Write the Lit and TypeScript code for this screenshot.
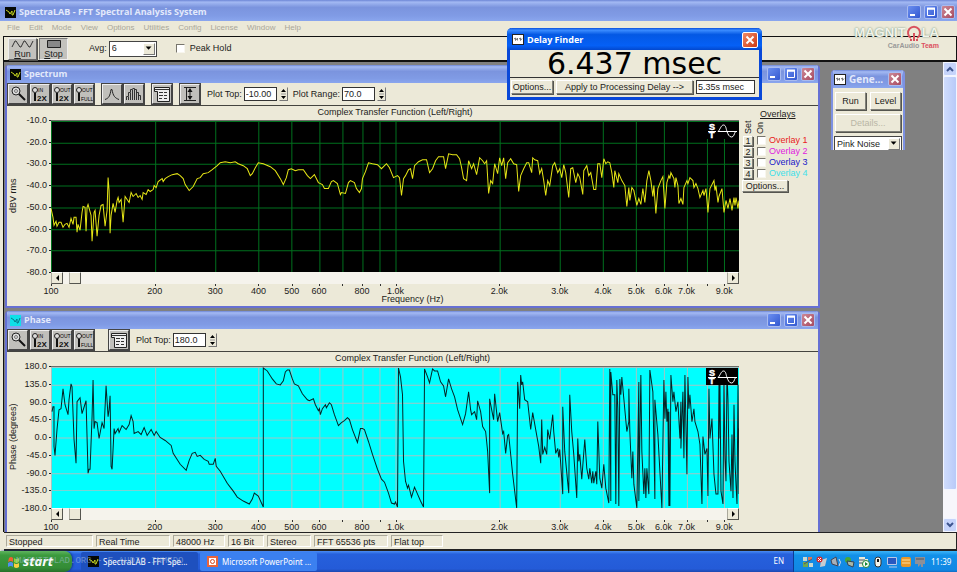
import { LitElement, html, svg, css } from "lit";
import { customElement, property } from "lit/decorators.js";

interface Series {
  id: string;
  unit: string;
  labels: string[];
  box: [number, number, number, number];
  points: string;
}

const spectrum: Series = {
  id: "spectrum",
  unit: "dBV rms",
  labels: ["-10.0", "-20.0", "-30.0", "-40.0", "-50.0", "-60.0", "-70.0", "-80.0"],
  box: [51, 120, 687, 152],
  points: `51,208 53,217 54,225 56,221 57,226 59,222 61,222 63,227 65,224 67,223 69,227 71,218 73,224 74,217 76,217 77,232 78,224 80,230 82,212 83,206 85,207 86,231 87,207 88,204 91,215 92,241 94,212 95,210 97,236 99,215 101,205 103,204 105,226 107,210 108,177 109,190 110,233 111,215 113,203 115,212 117,200 118,197 119,202 121,199 123,222 125,196 129,202 131,192 133,196 136,193 138,197 140,195 142,199 143,192 146,194 148,189 150,191 153,189 154,185 156,187 158,181 162,178 163,181 165,178 168,176 172,174 177,173 180,175 183,178 185,184 189,190 193,186 197,178 200,177 203,173 208,172 212,169 217,165 220,162 225,161 230,162 235,161 238,163 243,165 247,168 250,175 252,173 255,167 258,162 263,163 270,166 275,170 280,178 283,184 286,177 288,169 291,168 295,170 298,169 303,169 307,175 310,178 314,174 318,182 322,184 324,188 328,188 331,181 333,180 337,183 340,194 341,192 345,193 348,182 350,180 354,182 356,188 359,192 361,188 362,178 365,171 368,162 372,163 377,164 381,168 386,163 389,167 393,177 397,175 399,177 401,195 403,178 405,175 408,169 410,168 412,178 414,165 418,161 422,159 426,159 429,172 432,168 435,160 438,156 443,156 445,168 448,153 452,154 456,154 459,158 461,167 463,178 466,180 468,160 471,168 473,163 476,174 479,157 482,160 484,163 486,160 488,193 490,180 492,183 494,163 497,173 499,157 501,165 503,157 505,178 507,162 510,158 513,163 516,164 518,191 520,175 523,168 526,162 528,162 531,172 532,157 534,159 537,160 539,173 541,168 543,180 545,195 547,180 549,185 552,165 554,162 557,172 559,168 561,177 563,164 565,172 568,197 570,168 572,167 575,182 577,173 579,177 582,194 583,170 586,165 588,175 590,172 593,189 595,189 597,163 599,163 601,177 603,158 605,163 607,161 609,162 611,172 613,187 614,170 617,182 618,173 621,180 624,185 626,206 628,187 629,200 631,187 633,190 636,205 638,198 640,204 642,188 644,202 646,180 648,170 650,180 652,196 653,185 655,213 657,188 660,180 662,176 664,208 666,182 668,175 669,178 670,172 673,178 674,187 675,177 677,185 678,203 680,198 682,204 683,187 686,180 687,183 689,177 692,180 693,187 695,183 697,188 699,197 702,190 703,195 705,188 707,212 709,188 713,180 714,190 715,185 717,202 718,196 721,188 723,212 725,200 727,208 729,198 731,210 733,197 734,205 735,197 737,208 738,200`,
};

const phase: Series = {
  id: "phase",
  unit: "Phase (degrees)",
  labels: ["180.0", "135.0", "90.0", "45.0", "0.0", "-45.0", "-90.0", "-135.0", "-180.0"],
  box: [51, 365, 687, 142],
  points: `52,410 53,405 54,405 54,445 55,454 57,428 59,408 61,407 63,387 65,403 68,413 69,398 71,382 72,385 74,438 76,462 77,400 80,396 82,412 86,399 88,472 89,468 90,468 92,415 93,378 94,427 95,420 97,421 99,437 102,421 104,427 106,384 108,415 109,408 110,394 111,465 112,468 114,427 115,432 118,427 119,431 122,424 126,428 129,423 131,414 133,420 134,432 138,430 141,433 144,426 147,434 151,428 154,434 156,430 160,436 165,439 171,444 173,452 180,463 186,469 189,459 192,452 195,451 197,455 200,454 204,458 208,460 209,463 213,463 215,457 216,465 220,470 227,482 233,490 237,496 243,500 249,503 252,498 254,492 258,495 263,506 263,366 267,369 272,377 276,382 280,383 283,379 285,370 287,368 289,368 292,377 294,382 298,384 302,392 307,398 309,399 313,397 315,403 318,409 319,407 320,413 322,407 325,403 326,406 329,401 331,403 334,413 338,424 341,421 344,419 347,416 349,418 352,428 357,441 360,427 362,427 364,428 368,440 372,453 377,468 381,478 384,481 388,492 391,502 394,503 395,501 397,506 398,366 400,375 402,393 403,460 405,480 407,487 408,484 411,496 414,486 417,493 420,500 423,506 424,367 427,375 429,381 432,367 434,369 437,369 440,380 443,384 445,395 448,377 451,387 454,395 457,408 462,423 465,412 468,390 470,408 471,413 474,410 476,418 477,399 480,410 482,425 485,430 487,450 489,492 489,397 491,408 493,418 494,392 497,420 499,411 502,432 503,430 505,452 507,434 508,433 512,473 516,507 517,380 519,407 520,373 521,383 522,380 524,398 527,400 530,428 532,411 535,428 538,445 540,462 541,418 542,453 544,446 546,453 547,428 549,438 552,413 553,430 555,452 557,447 558,456 559,448 562,493 562,405 564,450 568,492 569,393 571,430 573,453 576,497 577,437 578,460 579,453 581,478 584,438 586,467 588,478 589,467 591,482 592,470 593,482 595,470 596,483 597,420 599,477 601,487 603,463 605,487 608,502 609,367 610,500 610,370 612,393 614,393 615,503 616,378 617,407 618,505 619,377 620,393 621,375 623,397 626,430 628,420 628,387 629,430 631,477 632,450 633,483 636,507 638,380 638,500 640,373 641,450 643,493 644,467 645,497 646,467 648,493 649,368 652,390 654,498 654,398 657,433 659,470 661,507 663,378 664,417 665,390 666,420 667,407 668,505 668,410 669,505 670,373 672,400 673,390 675,410 677,400 679,437 680,400 680,447 682,390 683,457 684,373 686,473 687,375 688,407 689,393 691,420 693,407 694,420 697,430 699,443 701,503 702,435 704,453 706,447 707,495 708,387 709,437 711,417 713,473 715,493 717,493 718,383 719,437 719,380 720,490 722,503 723,380 724,457 725,480 726,370 727,398 728,460 730,490 731,433 732,497 733,403 734,460 735,483 736,503 737,383 738,493 738,427`,
};

const DECADES = 687 / 344;
const frequencies = [100, 200, 300, 400, 500, 600, 700, 800, 900, 1000, 2000, 3000, 4000, 5000, 6000, 7000, 8000, 9000];
const unlabelled = new Set([700, 900, 8000]);
const fraction = (f: number) => Math.log10(f / 100) / DECADES;
const caption = (f: number) => (unlabelled.has(f) ? "" : f < 1000 ? String(f) : `${f / 1000}.0k`);

const controls = css`
  * { box-sizing: border-box; }
  button, input, select {
    font: inherit;
    color: inherit;
    margin: 0;
    padding: 0;
    border-radius: 0;
  }
  button {
    background: #ece9d8;
    border: 1px solid;
    border-color: #fff #808078 #808078 #fff;
    box-shadow: 1px 1px 0 #55554f;
    white-space: nowrap;
  }
  svg { display: block; flex: none; }
  .check {
    appearance: none;
    width: 9px;
    height: 9px;
    background: #fff;
    border: 1px solid;
    border-color: #77756c #f8f6ee #f8f6ee #77756c;
  }
`;

@customElement("signal-plot")
export class SignalPlot extends LitElement {
  @property({ attribute: false }) series: Series = spectrum;

  static styles = [controls, css`
    :host {
      display: grid;
      grid-template-columns: 12px 32px minmax(0, 1fr);
      grid-template-rows: 14px auto 12px 12px;
      line-height: 10px;
    }
    .title { grid-area: 1 / 3; text-align: center; line-height: 13px; }
    .centred { grid-column: 1 / 4; margin-right: -79px; }
    .unit {
      grid-area: 2 / 1;
      writing-mode: vertical-rl;
      rotate: 180deg;
      text-align: center;
      white-space: nowrap;
      line-height: 12px;
      font-size: 9px;
    }
    .scale {
      grid-area: 2 / 2;
      display: flex;
      flex-direction: column;
      justify-content: space-between;
      text-align: right;
      margin: -5px 0;
    }
    .scale span { padding-right: 4px; position: relative; }
    .scale span::after {
      content: "";
      position: absolute;
      right: 0;
      top: 5px;
      width: 2px;
      height: 1px;
      background: #222;
    }
    .plot { grid-area: 2 / 3; position: relative; height: 152px; border-top: 1px solid #6d6d68; }
    .phase { height: 142px; }
    .graph { width: 100%; height: 100%; background: #000; }
    .phase .graph { background: #00ffff; }
    .line { fill: none; stroke: #e6e616; stroke-width: 1; }
    .phase .line { stroke: #042426; }
    .grid { stroke: #00701e; }
    .phase .grid { stroke: #a4c4c4; }
    .mode { position: absolute; top: 1px; right: 1px; background: #000; }
    .mode text { font: bold 9px "Liberation Sans", sans-serif; fill: #fff; stroke: #fff; stroke-width: 0.5; }
    .bar { grid-area: 3 / 3; display: flex; background: #f5f3ec; height: 12px; }
    .bar button {
      width: 12px;
      display: grid;
      place-items: center;
      box-shadow: none;
      border-color: #fff #55554f #55554f #aaa89c;
    }
    .thumb { margin-left: 6px; }
    .right { margin-left: auto; }
    .axis { grid-area: 4 / 3; position: relative; }
    .mark {
      position: absolute;
      top: 0;
      width: 32px;
      margin-left: -16px;
      padding-top: 2px;
      text-align: center;
    }
    .mark::before {
      content: "";
      position: absolute;
      left: 16px;
      top: 0;
      width: 1px;
      height: 2px;
      background: #333;
    }
  `];

  render() {
    const s = this.series;
    const [x, y, w, h] = s.box;
    const last = s.labels.length - 1;
    return html`
      <div class="title ${s === phase ? "centred" : ""}">Complex Transfer Function (Left/Right)</div>
      <div class="unit">${s.unit}</div>
      <div class="scale">${s.labels.map((l) => html`<span>${l}</span>`)}</div>
      <div class="plot ${s.id}">
        <svg class="graph" viewBox=${`${x} ${y} ${w} ${h}`} preserveAspectRatio="none" role="img" aria-label=${s.unit}>
          ${frequencies.map((f) => {
            const gx = Math.round(x + fraction(f) * w) + 0.5;
            return svg`<line class="grid" x1=${gx} x2=${gx} y1=${y} y2=${y + h}></line>`;
          })}
          ${s.labels.map((_, i) => {
            const gy = Math.round(y + (i * h) / last) + 0.5;
            return svg`<line class="grid" x1=${x} x2=${x + w} y1=${gy} y2=${gy}></line>`;
          })}
          <polyline class="line" points=${s.points}></polyline>
        </svg>
        <svg class="mode" width="32" height="17" viewBox="0 0 32 17" fill="none" stroke="#fff">
          <text x="3" y="8">S</text>
          <text x="3" y="16">T</text>
          <path d="M2 9.500H10" />
          <path d="M12 9.500H31M12 9.500C14 8 15 3 17.500 3S20 7 21 9.500S23 15 25.500 15S28 12 29.500 9.500" />
        </svg>
      </div>
      <div class="bar">
        <button aria-label="Scroll left"><svg width="5" height="6"><path d="M4 0V6L1 3Z" /></svg></button>
        <button class="thumb" aria-label="Scroll position"></button>
        <button class="right" aria-label="Scroll right"><svg width="5" height="6"><path d="M1 0V6L4 3Z" /></svg></button>
      </div>
      <div class="axis">
        ${frequencies.map((f) => html`<span class="mark" style="left:${fraction(f) * 100}%">${caption(f)}</span>`)}
      </div>`;
  }
}

const lens = svg`<circle cx="6" cy="5" r="4" fill="#ddd" stroke="#222"></circle><circle cx="6" cy="5" r="1.500" stroke="#777"></circle><path d="M9 8L15 14" stroke="#111" stroke-width="2"></path>`;
const zoomIcon = (top: string, low: string) => svg`
  <circle cx="3" cy="4" r="2.500" fill="#ddd" stroke="#222"></circle>
  <path d="M3 7V15" stroke="#111" stroke-width="2"></path>
  <text class="tiny" x="6" y="6">${top}</text>
  <text class=${low === "2X" ? "big" : "tiny"} x="5" y="15">${low}</text>`;
const peakIcon = svg`<path d="M1 13.500C5 12 6 10 7 3.500H8C9 10 11 12 15 13.500" stroke="#222"></path>`;
const barsIcon = svg`<path d="M0.500 14V10.500H2.500V14M2.500 10V6.500H4.500V14M4.500 6V3.500H6.500V14M6.500 2.500H8.500V14M8.500 3.500H10.500V14M10.500 6.500H12.500V14M12.500 9.500H14.500V14" stroke="#333"></path>`;
const panelIcon = svg`<path d="M0.500 1.500H15.500V15.500H3.500V5.500H0.500Z" fill="#eee" stroke="#222"></path><path d="M1 3.500H15M5 6.500H9M5 9.500H9M5 12.500H8M10 6.500H13M10 9.500H13M10 12.500H13" stroke="#333"></path>`;
const rangeIcon = svg`<path d="M2 1.500H14M2 14.500H14M8 3V13M4.500 2V14" stroke="#222"></path><path d="M8 2L5.500 6H10.500ZM8 14L5.500 10H10.500Z" fill="#111"></path>`;

@customElement("app-root")
export class AppRoot extends LitElement {
  static styles = [controls, css`
    :host {
      display: flex;
      flex-direction: column;
      position: relative;
      min-height: 100vh;
      overflow: hidden;
      background: #ece9d8;
      color: #1c1c1a;
      font: 9px/11px "Liberation Sans", Arial, sans-serif;
    }
    .caption {
      display: flex;
      align-items: center;
      gap: 3px;
      height: 18px;
      padding: 0 3px;
      color: #e3e9fb;
      background: linear-gradient(#6d86d6, #a3b9f3 10%, #7b94de 35%, #809be5 75%, #8aa6ee);
      font: bold 9px/12px "Open Sans", "Noto Sans", sans-serif;
      white-space: nowrap;
    }
    .caption .name { flex: 1; overflow: hidden; text-overflow: ellipsis; }
    .main { height: 21px; padding: 3px 2px 0 5px; }
    .win {
      width: 14px;
      height: 14px;
      display: grid;
      place-items: center;
      border: 1px solid #a9bbef;
      border-radius: 2px;
      background: linear-gradient(135deg, #6b8ff0, #3358d0);
      box-shadow: none;
    }
    .close { background: linear-gradient(135deg, #cc8896, #a84a60); }
    .menu { display: flex; gap: 9px; height: 15px; padding: 0 7px; font-size: 8px; line-height: 14px; color: #aaa798; }
    .menu a { color: inherit; text-decoration: none; }
    .tools {
      display: flex;
      align-items: center;
      height: 26px;
      margin-left: 3px;
      padding-left: 4px;
      border: 1px solid #111;
      border-width: 1px 1px 2px 1px;
    }
    .tool {
      width: 29px;
      height: 22px;
      margin-right: 2px;
      background: #c3c2bd;
      display: flex;
      flex-direction: column;
      align-items: center;
      line-height: 10px;
      border-color: #eee #666 #666 #eee;
    }
    .stop { border-color: #777 #eee #eee #777; box-shadow: none; }
    .avg { margin: 0 2px 0 19px; }
    .combo { position: relative; display: block; height: 16px; border: 1px solid #444; background: #fff; }
    .combo select { appearance: none; border: 0; background: #fff; width: 100%; height: 14px; padding-left: 2px; line-height: 13px; }
    .combo svg { position: absolute; top: 1px; right: 1px; background: #ece9d8; border: 1px solid; border-color: #fff #777 #777 #fff; pointer-events: none; }
    .avgbox { width: 48px; }
    .hold { display: flex; align-items: center; gap: 5px; margin-left: 19px; }
    .desk { flex: 1; display: flex; position: relative; margin-left: 3px; border-left: 1px solid #111; background: #808080; overflow: hidden; }
    .frame { position: absolute; background: #ece9d8; border: 2px solid #6670d3; border-top: 0; border-radius: 4px 4px 0 0; overflow: hidden; }
    .spectrum { left: 1px; right: 137px; top: 3px; height: 243px; border-bottom-width: 2px; }
    .phase { left: 1px; right: 137px; top: 249px; bottom: 0; border-bottom: 0; }
    .strip { display: flex; align-items: center; height: 23px; padding-left: 1px; border-bottom: 1px solid #44443f; }
    .icon {
      width: 20px;
      height: 20px;
      margin-right: 2px;
      padding: 0;
      background: #c0bfbb;
      border-color: #eee #444 #444 #eee;
      box-shadow: 0 0 0 1px #444;
    }
    .space { margin-left: 6px; }
    .gap { margin-left: 13px; }
    .tiny { font: 5px "Liberation Sans", sans-serif; fill: #000; }
    .big { font: bold 8px "Liberation Sans", sans-serif; fill: #111; }
    .field { display: flex; align-items: center; gap: 2px; margin-left: 5px; }
    .field input, .reading { width: 33px; height: 14px; padding: 0 1px; border: 1px solid #333; background: #fff; }
    .spin { width: 9px; height: 14px; display: grid; place-items: center; box-shadow: none; border-color: #ece9d8 #777 #777 #ece9d8; }
    .body { display: grid; grid-template-columns: minmax(0, 1fr) 79px; }
    .hz { grid-column: 1 / 3; text-align: center; line-height: 9px; margin-top: -1px; }
    .overlays { grid-area: 1 / 2; padding: 3px 3px 0 4px; }
    .head { display: block; margin-left: 17px; text-decoration: underline; line-height: 10px; }
    .cols { display: flex; gap: 1px; height: 15px; margin-bottom: 1px; }
    .cols span { writing-mode: vertical-rl; rotate: 180deg; line-height: 11px; font-size: 9px; }
    .row { display: flex; align-items: center; height: 11px; white-space: nowrap; }
    .row button { width: 10px; height: 10px; line-height: 8px; margin-right: 4px; }
    .row .check { margin-right: 3px; }
    .red { color: #e82020; }
    .magenta { color: #e020e0; }
    .blue { color: #1818c8; }
    .cyan { color: #40e0e8; }
    .options { width: 46px; height: 12px; line-height: 9px; margin: 1px 0 0 -1px; }
    .gen { right: 52px; top: 8px; width: 74px; height: 80px; border-width: 0 2px; border-color: #7d91e2; }
    .gen .caption { font-size: 10px; padding: 0 1px; }
    .pair { display: grid; grid-template-columns: 1fr 1fr; gap: 4px; padding: 4px 2px 4px 2px; }
    .pair button { height: 18px; }
    .wide { grid-column: 1 / 3; color: #b9b6a6; }
    .noise { margin: 0 1px; }
    .vbar { width: 14px; margin-left: auto; display: flex; flex-direction: column; background: #f7f6fb; }
    .vbar button { height: 14px; flex: none; display: grid; place-items: center; background: #c6d4fb; border-color: #f2f5ff; box-shadow: none; border-radius: 2px; }
    .vbar .handle { flex: 1; margin-bottom: 28px; background: linear-gradient(90deg, #cfdcfd, #b8caf8); }
    .delay {
      position: absolute;
      top: 28px;
      right: 195px;
      width: 255px;
      background: #ece9d8;
      border: 3px solid #0a48d8;
      border-top: 0;
      border-radius: 5px 5px 0 0;
    }
    .delay .caption {
      height: 22px;
      margin: 0 -3px;
      padding: 1px 4px 0 5px;
      border-radius: 5px 5px 0 0;
      color: #fff;
      background: linear-gradient(#0a4fdc, #3b8cff 10%, #0458e4 30%, #0560f6 80%, #0348ce);
    }
    .delay .close { width: 16px; height: 16px; border-color: #fff; background: linear-gradient(135deg, #f08a68, #cf3a14); }
    .value { display: block; text-align: center; height: 28px; border-bottom: 1px solid #333; color: #000; font: 30px/28px "DejaVu Sans", sans-serif; }
    .apply { display: flex; gap: 3px; padding: 2px 4px 3px 1px; }
    .apply button { height: 14px; line-height: 11px; flex: none; width: 42px; }
    .apply .go { flex: 1; }
    .reading { width: 59px; }
    .logo { position: absolute; top: 22px; right: 18px; text-align: right; pointer-events: none; }
    .brand { display: flex; align-items: center; justify-content: flex-end; color: #f2f3ea; font: bold 13px/22px "Liberation Sans", sans-serif; text-shadow: 0 0 2px #5f8870; }
    .team { display: block; font: bold 7px/7px "Liberation Sans", sans-serif; color: #999; margin-top: -2px; }
    .team b { color: #dc5060; }
    .status { display: flex; height: 19px; margin-left: 4px; padding: 2px 0 2px 2px; border: 1px solid #222; border-width: 1px 1px 2px 0; background: #ece9d8; }
    .cell { padding: 0 2px; margin-right: 3px; line-height: 13px; border: 1px solid; border-color: #aaa89a #fff #fff #aaa89a; white-space: nowrap; }
    .w90 { width: 87px; }
    .w77 { width: 74px; }
    .w54 { width: 52px; }
    .w40 { width: 36px; }
    .w47 { width: 44px; }
    .taskbar { position: relative; display: flex; height: 21px; color: #fff; background: linear-gradient(#4a8cf4, #2660dc 15%, #245bd8 85%, #1c48b0); font: 8px/19px "Noto Sans", sans-serif; }
    .start {
      width: 72px;
      display: flex;
      align-items: center;
      gap: 3px;
      padding-left: 8px;
      border: 0;
      border-radius: 0 8px 8px 0;
      background: linear-gradient(#5fb45f, #3b9a3d 20%, #348c36 80%, #26702a);
      box-shadow: 1px 0 2px #14368c;
      font: italic bold 13px/19px "Open Sans", "Noto Sans", sans-serif;
    }
    .task { display: flex; align-items: center; gap: 4px; width: 117px; height: 19px; margin: 1px 0 0 2px; padding: 0 7px; border: 0; border-radius: 2px; background: #3b80f0; box-shadow: none; line-height: 18px; }
    .active { margin-left: 9px; background: #1e50be; }
    .lang { margin-left: auto; padding-right: 9px; }
    .tray { display: flex; align-items: center; gap: 2px; width: 164px; padding-left: 8px; background: linear-gradient(#3cb4f8, #1290e8 20%, #1188e4 90%, #0f6cc4); border-left: 1px solid #0c3c94; }
    .clock { margin-left: 3px; }
    .mark { position: absolute; left: 16px; top: 1px; color: #b0c8e0; opacity: 0.5; font: 9px/18px "Liberation Mono", monospace; white-space: pre; pointer-events: none; }
  `];

  private scope(color = "#050805", line = "#c8d820") {
    return html`<svg width="11" height="11" viewBox="0 0 11 11" fill="none">
      <rect width="11" height="11" fill=${color} /><path d="M1 3L4 5L5 7L7 4V8H8L10 3" stroke=${line} />
    </svg>`;
  }

  private meter() {
    return html`<svg width="12" height="11" viewBox="0 0 12 11" fill="none" stroke="#777">
      <rect x=".5" y=".5" width="11" height="10" fill="#fff" stroke="#222" /><path d="M2 5L3.500 4V6.500L5.500 4V6.500M7 5L8.500 4V6.500L10 4.500" />
    </svg>`;
  }

  private closer() {
    return html`<button class="win close" aria-label="Close"><svg width="10" height="10" stroke="#fff" stroke-width="2"><path d="M1.500 1.500L8.500 8.500M8.500 1.500L1.500 8.500" /></svg></button>`;
  }

  private buttons() {
    return html`
      <button class="win" aria-label="Minimize"><svg width="10" height="10"><path d="M1 7H6V9H1Z" fill="#fff" /></svg></button>
      <button class="win" aria-label="Maximize"><svg width="10" height="10" fill="none" stroke="#fff"><path d="M1.500 1V8.500H8.500V1M1 2H9" /><path d="M1 1.500H9" stroke-width="2" /></svg></button>
      ${this.closer()}`;
  }

  private icon(name: string, art: unknown, cls = "") {
    return html`<button class="icon ${cls}" aria-label=${name}><svg width="18" height="18" viewBox="-1 -1 18 18" fill="none">${art}</svg></button>`;
  }

  private zooms() {
    return html`${this.icon("Zoom", lens)}${this.icon("Zoom in", zoomIcon("IN", "2X"))}
      ${this.icon("Zoom out", zoomIcon("OUT", "2X"))}${this.icon("Zoom out full", zoomIcon("OUT", "FULL"))}`;
  }

  private field(label: string, value: string) {
    return html`<label class="field">${label} <input .value=${value} /><button class="spin" aria-label="Step ${label}">
      <svg width="5" height="10"><path d="M0 3H5L2.500 0ZM0 7H5L2.500 10Z" /><path d="M0 5H5" stroke="#999" /></svg></button></label>`;
  }

  private arrow() {
    return html`<svg width="12" height="12" viewBox="0 0 12 12"><path d="M2 3H9L5.500 7Z" /></svg>`;
  }

  render() {
    return html`
      <header class="caption main">${this.scope()}<span class="name">SpectraLAB - FFT Spectral Analysis System</span>${this.buttons()}</header>
      <nav class="menu">
        ${["File", "Edit", "Mode", "View", "Options", "Utilities", "Config", "License", "Window", "Help"].map((m) => html`<a href="#">${m}</a>`)}
      </nav>
      <div class="tools">
        <button class="tool"><svg width="24" height="10" fill="none" stroke="#333"><path d="M1 8L4 2H5L9 8H10L13 2H14L18 8H19L22 2" /></svg><span><u>R</u>un</span></button>
        <button class="tool stop"><svg width="24" height="10" fill="#888" stroke="#222"><path d="M5.500 1.500H18.500V8.500H5.500Z" /></svg><span><u>S</u>top</span></button>
        <label class="avg" for="avg">Avg:</label>
        <span class="combo avgbox"><select id="avg"><option>6</option></select>${this.arrow()}</span>
        <label class="hold"><input class="check" type="checkbox" />Peak Hold</label>
      </div>

      <main class="desk">
        <section class="frame spectrum">
          <div class="caption">${this.scope()}<span class="name">Spectrum</span>${this.buttons()}</div>
          <div class="strip">
            ${this.zooms()}
            ${this.icon("Line", peakIcon, "space")}${this.icon("Bars", barsIcon)}
            ${this.icon("Settings", panelIcon, "space")}${this.icon("Range", rangeIcon, "space")}
            ${this.field("Plot Top:", "-10.00")}${this.field("Plot Range:", "70.0")}
          </div>
          <div class="body">
            <signal-plot .series=${spectrum}></signal-plot>
            <div class="hz">Frequency (Hz)</div>
            <aside class="overlays">
              <span class="head">Overlays</span>
              <div class="cols"><span>Set</span><span>On</span></div>
              ${["red", "magenta", "blue", "cyan"].map((c, i) => html`<div class="row">
                <button>${i + 1}</button><input class="check" type="checkbox" id="ov${i}" /><label class=${c} for="ov${i}">Overlay ${i + 1}</label>
              </div>`)}
              <button class="options">Options...</button>
            </aside>
          </div>
        </section>

        <section class="frame phase">
          <div class="caption">${this.scope("#10e0e8", "#087888")}<span class="name">Phase</span>${this.buttons()}</div>
          <div class="strip">
            ${this.zooms()}${this.icon("Settings", panelIcon, "gap")}${this.field("Plot Top:", "180.0")}
          </div>
          <div class="body"><signal-plot .series=${phase}></signal-plot></div>
        </section>

        <section class="frame gen">
          <div class="caption">${this.meter()}<span class="name">Gene...</span>${this.closer()}</div>
          <div class="pair"><button>Run</button><button>Level</button><button class="wide" disabled>Details...</button></div>
          <span class="combo noise"><select aria-label="Signal"><option>Pink Noise</option></select>${this.arrow()}</span>
        </section>

        <div class="vbar">
          <button aria-label="Scroll up"><svg width="8" height="6" fill="none" stroke="#3d5590" stroke-width="2"><path d="M1 5L4 2L7 5" /></svg></button>
          <button class="handle" aria-label="Scroll position"></button>
          <button aria-label="Scroll down"><svg width="8" height="6" fill="none" stroke="#3d5590" stroke-width="2"><path d="M1 1L4 4L7 1" /></svg></button>
        </div>
      </main>

      <section class="delay">
        <div class="caption">${this.meter()}<span class="name">Delay Finder</span>${this.closer()}</div>
        <output class="value">6.437 msec</output>
        <div class="apply"><button>Options...</button><button class="go">Apply to Processing Delay --&gt;</button><input class="reading" aria-label="Delay" .value=${"5.35s msec"} /></div>
      </section>

      <div class="logo">
        <span class="brand">MAGNIT<svg width="16" height="18" viewBox="0 0 16 18" fill="none" stroke="#d9525e" stroke-width="2"><path d="M5 14A6 6 0 1 1 11 14M8 9V17" /><path d="M5 15V17M11 15V17" /></svg>LA</span>
        <span class="team">CarAudio <b>Team</b></span>
      </div>

      <footer>
        <div class="status">
          <span class="cell w90">Stopped</span><span class="cell w77">Real Time</span><span class="cell w54">48000 Hz</span>
          <span class="cell w40">16 Bit</span><span class="cell w47">Stereo</span><span class="cell w77">FFT 65536 pts</span><span class="cell w54">Flat top</span>
        </div>
        <div class="taskbar">
          <button class="start"><svg width="12" height="12" viewBox="0 0 12 12"><path d="M1 2Q3 0 5 2V6Q3 4 0 6Z" fill="#f06030" /><path d="M6 2Q8 4 11 2V6Q8 8 6 6Z" fill="#90d040" /><path d="M0 7Q3 5 5 7V11Q3 9 0 11Z" fill="#5090f0" /><path d="M6 7Q8 9 11 7V11Q8 13 6 11Z" fill="#f8d040" /></svg>start</button>
          <button class="task active">${this.scope()}SpectraLAB - FFT Spe...</button>
          <button class="task"><svg width="11" height="11" viewBox="0 0 11 11"><path d="M0 0H11V11H0Z" fill="#e8643c" /><path d="M2 2H9V9H2Z" fill="#fff" /><circle cx="5.500" cy="5.500" r="2" fill="none" stroke="#d84820" /></svg>Microsoft PowerPoint ...</button>
          <span class="lang">EN</span>
          <div class="tray">
            <svg width="12" height="12" viewBox="0 0 12 12"><path d="M1 1H5V5H1ZM7 7H11V11H7Z" fill="#c8d8d0" /><path d="M6 1H10V4H6Z" fill="#d87858" /><path d="M1 6H6V11H1Z" fill="#70a850" /><path d="M2 8L10 3" stroke="#556" /></svg>
            <svg width="12" height="12" viewBox="0 0 12 12"><path d="M5 4L11 2L9 10L4 11Z" fill="#c8ccd0" /><circle cx="3.500" cy="3.500" r="3" fill="#d82828" /><path d="M2 2L5 5M5 2L2 5" stroke="#fff" /></svg>
            <svg width="12" height="12" viewBox="0 0 12 12"><path d="M1 4L6 1L8 10L2 8Z" fill="#a8b0b8" stroke="#445" /><path d="M9 3Q12 6 9 10" fill="none" stroke="#dde" /></svg>
            <svg width="12" height="12" viewBox="0 0 12 12"><circle cx="4" cy="4" r="3" fill="#48a838" /><path d="M3 5L10 6L9 11L4 9Z" fill="#a8b8a8" stroke="#345" /></svg>
            <svg width="12" height="12" viewBox="0 0 12 12"><path d="M1 1H7V3H10V11H1Z" fill="#e8eadc" /><path d="M1 4H7M1 7H5" stroke="#456" /><circle cx="8" cy="8" r="3.500" fill="#fff" stroke="#283" /><path d="M7 6L10 8L7 10Z" fill="#183" /></svg>
            <svg width="12" height="12" viewBox="0 0 12 12"><rect x="3" y="1" width="6" height="10" rx="3" fill="#f4f4ec" stroke="#333" /><path d="M6 3V6" stroke="#111" stroke-width="2" /></svg>
            <svg width="12" height="12" viewBox="0 0 12 12"><path d="M1.500 1.500H10.500V8.500H1.500ZM3 11H11" fill="#2858c0" stroke="#b8c8e8" /></svg>
            <svg width="12" height="12" viewBox="0 0 12 12"><rect x="1" y="1" width="10" height="10" rx="2" fill="#e89828" /><path d="M2 4H10M2 7H10" stroke="#ffe0a0" /></svg>
            <svg width="12" height="12" viewBox="0 0 12 12"><path d="M1 1H11V8H9V11H7V8L4 11V8H1Z" fill="#8c9098" /><path d="M2 3H10" stroke="#555" /></svg>
            <span class="clock">11:39</span>
          </div>
          <span class="mark" aria-hidden="true">MAGNITOLAD.ORG - E AUDIO INMEDO</span>
        </div>
      </footer>`;
  }
}
